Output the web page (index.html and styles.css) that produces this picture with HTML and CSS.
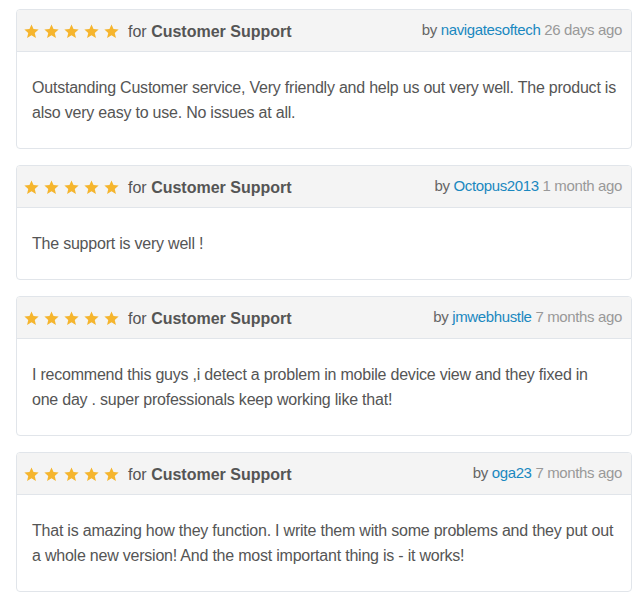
FILE: index.html
```html
<!DOCTYPE html>
<html>
<head>
<meta charset="utf-8">
<link rel="stylesheet" href="styles.css">
</head>
<body>
<div class="reviews">
  <div class="review">
    <div class="review-head">
      <div class="rating">
        <span class="stars">
          <svg class="star" viewBox="0 0 24 24"><path d="M12 0.6L15.23 8.15L23.41 8.89L17.23 14.3L19.05 22.31L12 18.1L4.95 22.31L6.77 14.3L0.59 8.89L8.77 8.15Z"/></svg>
          <svg class="star" viewBox="0 0 24 24"><path d="M12 0.6L15.23 8.15L23.41 8.89L17.23 14.3L19.05 22.31L12 18.1L4.95 22.31L6.77 14.3L0.59 8.89L8.77 8.15Z"/></svg>
          <svg class="star" viewBox="0 0 24 24"><path d="M12 0.6L15.23 8.15L23.41 8.89L17.23 14.3L19.05 22.31L12 18.1L4.95 22.31L6.77 14.3L0.59 8.89L8.77 8.15Z"/></svg>
          <svg class="star" viewBox="0 0 24 24"><path d="M12 0.6L15.23 8.15L23.41 8.89L17.23 14.3L19.05 22.31L12 18.1L4.95 22.31L6.77 14.3L0.59 8.89L8.77 8.15Z"/></svg>
          <svg class="star" viewBox="0 0 24 24"><path d="M12 0.6L15.23 8.15L23.41 8.89L17.23 14.3L19.05 22.31L12 18.1L4.95 22.31L6.77 14.3L0.59 8.89L8.77 8.15Z"/></svg>
        </span>
        <span class="for">for <strong>Customer Support</strong></span>
      </div>
      <div class="meta">by <a class="author" href="#">navigatesoftech</a> <span class="date">26 days ago</span></div>
    </div>
    <div class="review-body"><p>Outstanding Customer service, Very friendly and help us out very well. The product is also very easy to use. No issues at all.</p></div>
  </div>

  <div class="review">
    <div class="review-head">
      <div class="rating">
        <span class="stars">
          <svg class="star" viewBox="0 0 24 24"><path d="M12 0.6L15.23 8.15L23.41 8.89L17.23 14.3L19.05 22.31L12 18.1L4.95 22.31L6.77 14.3L0.59 8.89L8.77 8.15Z"/></svg>
          <svg class="star" viewBox="0 0 24 24"><path d="M12 0.6L15.23 8.15L23.41 8.89L17.23 14.3L19.05 22.31L12 18.1L4.95 22.31L6.77 14.3L0.59 8.89L8.77 8.15Z"/></svg>
          <svg class="star" viewBox="0 0 24 24"><path d="M12 0.6L15.23 8.15L23.41 8.89L17.23 14.3L19.05 22.31L12 18.1L4.95 22.31L6.77 14.3L0.59 8.89L8.77 8.15Z"/></svg>
          <svg class="star" viewBox="0 0 24 24"><path d="M12 0.6L15.23 8.15L23.41 8.89L17.23 14.3L19.05 22.31L12 18.1L4.95 22.31L6.77 14.3L0.59 8.89L8.77 8.15Z"/></svg>
          <svg class="star" viewBox="0 0 24 24"><path d="M12 0.6L15.23 8.15L23.41 8.89L17.23 14.3L19.05 22.31L12 18.1L4.95 22.31L6.77 14.3L0.59 8.89L8.77 8.15Z"/></svg>
        </span>
        <span class="for">for <strong>Customer Support</strong></span>
      </div>
      <div class="meta">by <a class="author" href="#">Octopus2013</a> <span class="date">1 month ago</span></div>
    </div>
    <div class="review-body"><p>The support is very well !</p></div>
  </div>

  <div class="review">
    <div class="review-head">
      <div class="rating">
        <span class="stars">
          <svg class="star" viewBox="0 0 24 24"><path d="M12 0.6L15.23 8.15L23.41 8.89L17.23 14.3L19.05 22.31L12 18.1L4.95 22.31L6.77 14.3L0.59 8.89L8.77 8.15Z"/></svg>
          <svg class="star" viewBox="0 0 24 24"><path d="M12 0.6L15.23 8.15L23.41 8.89L17.23 14.3L19.05 22.31L12 18.1L4.95 22.31L6.77 14.3L0.59 8.89L8.77 8.15Z"/></svg>
          <svg class="star" viewBox="0 0 24 24"><path d="M12 0.6L15.23 8.15L23.41 8.89L17.23 14.3L19.05 22.31L12 18.1L4.95 22.31L6.77 14.3L0.59 8.89L8.77 8.15Z"/></svg>
          <svg class="star" viewBox="0 0 24 24"><path d="M12 0.6L15.23 8.15L23.41 8.89L17.23 14.3L19.05 22.31L12 18.1L4.95 22.31L6.77 14.3L0.59 8.89L8.77 8.15Z"/></svg>
          <svg class="star" viewBox="0 0 24 24"><path d="M12 0.6L15.23 8.15L23.41 8.89L17.23 14.3L19.05 22.31L12 18.1L4.95 22.31L6.77 14.3L0.59 8.89L8.77 8.15Z"/></svg>
        </span>
        <span class="for">for <strong>Customer Support</strong></span>
      </div>
      <div class="meta">by <a class="author" href="#">jmwebhustle</a> <span class="date">7 months ago</span></div>
    </div>
    <div class="review-body"><p>I recommend this guys ,i detect a problem in mobile device view and they fixed in one day . super professionals keep working like that!</p></div>
  </div>

  <div class="review">
    <div class="review-head">
      <div class="rating">
        <span class="stars">
          <svg class="star" viewBox="0 0 24 24"><path d="M12 0.6L15.23 8.15L23.41 8.89L17.23 14.3L19.05 22.31L12 18.1L4.95 22.31L6.77 14.3L0.59 8.89L8.77 8.15Z"/></svg>
          <svg class="star" viewBox="0 0 24 24"><path d="M12 0.6L15.23 8.15L23.41 8.89L17.23 14.3L19.05 22.31L12 18.1L4.95 22.31L6.77 14.3L0.59 8.89L8.77 8.15Z"/></svg>
          <svg class="star" viewBox="0 0 24 24"><path d="M12 0.6L15.23 8.15L23.41 8.89L17.23 14.3L19.05 22.31L12 18.1L4.95 22.31L6.77 14.3L0.59 8.89L8.77 8.15Z"/></svg>
          <svg class="star" viewBox="0 0 24 24"><path d="M12 0.6L15.23 8.15L23.41 8.89L17.23 14.3L19.05 22.31L12 18.1L4.95 22.31L6.77 14.3L0.59 8.89L8.77 8.15Z"/></svg>
          <svg class="star" viewBox="0 0 24 24"><path d="M12 0.6L15.23 8.15L23.41 8.89L17.23 14.3L19.05 22.31L12 18.1L4.95 22.31L6.77 14.3L0.59 8.89L8.77 8.15Z"/></svg>
        </span>
        <span class="for">for <strong>Customer Support</strong></span>
      </div>
      <div class="meta">by <a class="author" href="#">oga23</a> <span class="date">7 months ago</span></div>
    </div>
    <div class="review-body"><p>That is amazing how they function. I write them with some problems and they put out a whole new version! And the most important thing is - it works!</p></div>
  </div>
</div>
</body>
</html>
```

FILE: styles.css
```css
html, body {
  margin: 0;
  padding: 0;
  background: #ffffff;
}

body {
  font-family: "Liberation Sans", Arial, sans-serif;
  color: #555555;
  padding: 9px 9px 0 16px;
}

.reviews {
  display: flex;
  flex-direction: column;
  gap: 16px;
}

.review {
  border: 1px solid #e1e5ea;
  border-radius: 4px;
  background: #fff;
  overflow: hidden;
}

.review-head {
  display: flex;
  justify-content: space-between;
  align-items: center;
  height: 42px;
  box-sizing: border-box;
  padding: 0 9px 0 7px;
  background: #f4f4f4;
  border-bottom: 1px solid #e1e5ea;
}

.rating {
  display: flex;
  align-items: center;
  font-size: 16px;
  padding-top: 2px;
}

.stars {
  display: flex;
  gap: 5px;
  margin-right: 9px;
}

.star {
  width: 15px;
  height: 15px;
  fill: #f5b52e;
}

.for strong {
  font-weight: bold;
  color: #555555;
}

.meta {
  font-size: 15px;
  letter-spacing: -0.36px;
  color: #666666;
  padding-bottom: 2px;
}

.author {
  color: #1a88c0;
  text-decoration: none;
}

.date {
  color: #999999;
}

.review-body {
  padding: 23px 15px 23px;
}

.review-body p {
  margin: 0;
  font-size: 16px;
  line-height: 25px;
  letter-spacing: -0.22px;
  color: #555555;
}
```
